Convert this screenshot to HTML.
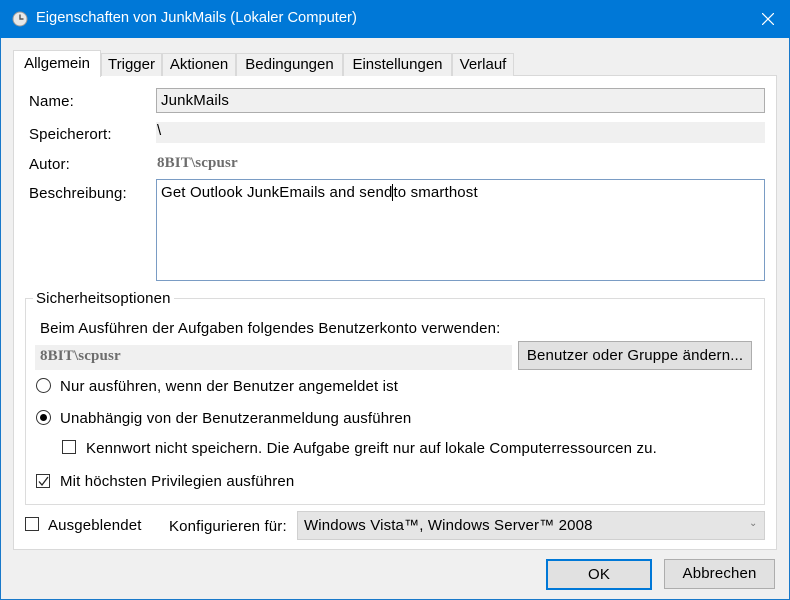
<!DOCTYPE html>
<html><head><meta charset="utf-8"><style>
*{box-sizing:border-box;margin:0;padding:0}
body{width:790px;height:600px;overflow:hidden;font-family:"Liberation Sans",sans-serif;font-size:15px;letter-spacing:0.15px;color:#000;background:#f0f0f0;position:relative}
.a{position:absolute;white-space:nowrap}
.win{position:absolute;left:0;top:0;width:790px;height:600px;border:1px solid #1979ca;background:#f0f0f0}
.title{position:absolute;left:0;top:0;width:790px;height:38px;background:#0078d7;color:#fff;font-size:14.7px;letter-spacing:0}
.tab{position:absolute;top:53px;height:23px;border:1px solid #d9d9d9;border-bottom:none;background:#f0f0f0;text-align:center;line-height:22px;letter-spacing:0}
.panel{position:absolute;left:13px;top:75px;width:764px;height:475px;background:#fff;border:1px solid #d9d9d9}
.btn{position:absolute;background:#e1e1e1;border:1px solid #adadad;text-align:center}
.cb{position:absolute;width:14px;height:14px;border:1px solid #333;background:#fff}
.rb{position:absolute;width:15px;height:15px;border:1px solid #333;border-radius:50%;background:#fff}
</style></head><body>
<div class="win"></div>
<div class="title">
<svg class="a" style="left:12px;top:11px" width="16" height="16"><circle cx="8" cy="8" r="7" fill="#e8e8e8" stroke="#999"/><path d="M8 3.5V8h3.5" stroke="#555" stroke-width="1.4" fill="none"/></svg>
<div class="a" style="left:36px;top:10px">Eigenschaften von JunkMails (Lokaler Computer)</div>
<svg class="a" style="left:762px;top:13px" width="12" height="12"><path d="M0 0L12 12M12 0L0 12" stroke="#fff" stroke-width="1.2"/></svg>
</div>
<div class="panel"></div>
<div class="tab" style="left:13px;top:50px;width:88px;height:27px;background:#fff;line-height:25px">Allgemein</div>
<div class="tab" style="left:101px;width:61px">Trigger</div>
<div class="tab" style="left:162px;width:74px">Aktionen</div>
<div class="tab" style="left:236px;width:107px">Bedingungen</div>
<div class="tab" style="left:343px;width:109px">Einstellungen</div>
<div class="tab" style="left:452px;width:62px">Verlauf</div>

<div class="a" style="left:29px;top:93px">Name:</div>
<div class="a" style="left:156px;top:88px;width:609px;height:25px;background:#f0f0f0;border:1px solid #adadad;padding:3px 4px">JunkMails</div>
<div class="a" style="left:29px;top:126px">Speicherort:</div>
<div class="a" style="left:156px;top:122px;width:609px;height:21px;background:#f0f0f0;padding:0 1px">\</div>
<div class="a" style="left:29px;top:156px">Autor:</div>
<div class="a" style="left:157px;top:155px;color:#6d6d6d;font-weight:bold;font-family:'Liberation Serif',serif;font-size:15px">8BIT\scpusr</div>
<div class="a" style="left:29px;top:185px">Beschreibung:</div>
<div class="a" style="left:156px;top:179px;width:609px;height:102px;background:#fff;border:1px solid #7a9cc4;padding:4px 4px">Get Outlook JunkEmails and send<span style="border-left:1px solid #000"></span>to smarthost</div>

<div class="a" style="left:25px;top:298px;width:740px;height:207px;border:1px solid #dcdcdc"></div>
<div class="a" style="left:33px;top:290px;background:#fff;padding:0 3px">Sicherheitsoptionen</div>
<div class="a" style="left:40px;top:320px">Beim Ausführen der Aufgaben folgendes Benutzerkonto verwenden:</div>
<div class="a" style="left:35px;top:345px;width:477px;height:25px;background:#f0f0f0;color:#6d6d6d;font-weight:bold;font-family:'Liberation Serif',serif;font-size:15px;padding:3px 5px">8BIT\scpusr</div>
<div class="btn" style="left:518px;top:341px;width:234px;height:29px;line-height:27px">Benutzer oder Gruppe ändern...</div>
<div class="rb" style="left:36px;top:378px"></div>
<div class="a" style="left:60px;top:378px">Nur ausführen, wenn der Benutzer angemeldet ist</div>
<div class="rb" style="left:36px;top:410px"></div><div class="a" style="left:40px;top:414px;width:7px;height:7px;border-radius:50%;background:#000"></div>
<div class="a" style="left:60px;top:410px">Unabhängig von der Benutzeranmeldung ausführen</div>
<div class="cb" style="left:62px;top:440px"></div>
<div class="a" style="left:86px;top:440px">Kennwort nicht speichern. Die Aufgabe greift nur auf lokale Computerressourcen zu.</div>
<div class="cb" style="left:36px;top:474px"></div>
<svg class="a" style="left:37px;top:475px" width="13" height="13"><path d="M2 6.5L5 10L11 2" stroke="#222" stroke-width="1.3" fill="none"/></svg>
<div class="a" style="left:60px;top:473px">Mit höchsten Privilegien ausführen</div>

<div class="cb" style="left:25px;top:517px"></div>
<div class="a" style="left:48px;top:517px">Ausgeblendet</div>
<div class="a" style="left:169px;top:518px">Konfigurieren für:</div>
<div class="a" style="left:297px;top:511px;width:468px;height:29px;background:#e5e5e5;border:1px solid #d0d0d0;padding:5px 6px">Windows Vista™, Windows Server™ 2008</div>
<div class="a" style="left:749px;top:518px;font-size:10px;color:#777">⌄</div>

<div class="btn" style="left:546px;top:559px;width:106px;height:31px;border:2px solid #0078d7;line-height:27px">OK</div>
<div class="btn" style="left:664px;top:559px;width:111px;height:30px;line-height:28px">Abbrechen</div>
</body></html>
